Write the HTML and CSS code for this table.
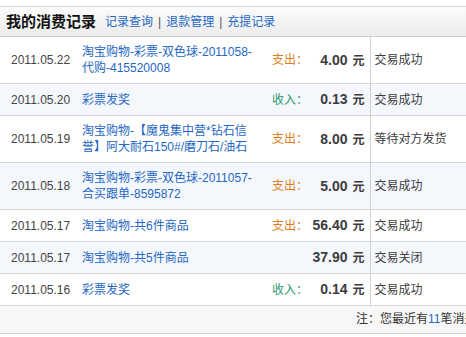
FILE: index.html
```html
<!DOCTYPE html>
<html lang="zh-CN">
<head>
<meta charset="utf-8">
<title>我的消费记录</title>
<link rel="stylesheet" href="styles.css">
</head>
<body>
<div class="page">
  <div class="panel">
    <div class="head">
      <h2 class="title">我的消费记录</h2>
      <nav class="tabs">
        <a href="#">记录查询</a><span class="sep">|</span><a href="#">退款管理</a><span class="sep">|</span><a href="#">充提记录</a>
      </nav>
    </div>
    <table class="records">
      <colgroup>
        <col class="c-date"><col class="c-desc"><col class="c-type"><col class="c-amt"><col class="c-status">
      </colgroup>
      <tbody>
        <tr>
          <td class="date">2011.05.22</td>
          <td class="desc"><a href="#">淘宝购物-彩票-双色球-2011058-代购-415520008</a></td>
          <td class="type out">支出：</td>
          <td class="amt">4.00<span class="unit">元</span></td>
          <td class="status">交易成功</td>
        </tr>
        <tr class="alt">
          <td class="date">2011.05.20</td>
          <td class="desc"><a href="#">彩票发奖</a></td>
          <td class="type in">收入：</td>
          <td class="amt">0.13<span class="unit">元</span></td>
          <td class="status">交易成功</td>
        </tr>
        <tr>
          <td class="date">2011.05.19</td>
          <td class="desc"><a href="#">淘宝购物-【魔鬼集中营*钻石信誉】阿大耐石150#/磨刀石/油石</a></td>
          <td class="type out">支出：</td>
          <td class="amt">8.00<span class="unit">元</span></td>
          <td class="status">等待对方发货</td>
        </tr>
        <tr class="alt">
          <td class="date">2011.05.18</td>
          <td class="desc"><a href="#">淘宝购物-彩票-双色球-2011057-合买跟单-8595872</a></td>
          <td class="type out">支出：</td>
          <td class="amt">5.00<span class="unit">元</span></td>
          <td class="status">交易成功</td>
        </tr>
        <tr>
          <td class="date">2011.05.17</td>
          <td class="desc"><a href="#">淘宝购物-共6件商品</a></td>
          <td class="type out">支出：</td>
          <td class="amt">56.40<span class="unit">元</span></td>
          <td class="status">交易成功</td>
        </tr>
        <tr class="alt">
          <td class="date">2011.05.17</td>
          <td class="desc"><a href="#">淘宝购物-共5件商品</a></td>
          <td class="type"></td>
          <td class="amt">37.90<span class="unit">元</span></td>
          <td class="status">交易关闭</td>
        </tr>
        <tr>
          <td class="date">2011.05.16</td>
          <td class="desc"><a href="#">彩票发奖</a></td>
          <td class="type in">收入：</td>
          <td class="amt">0.14<span class="unit">元</span></td>
          <td class="status">交易成功</td>
        </tr>
      </tbody>
    </table>
    <div class="foot">注：您最近有<a href="#">11</a>笔消费记录</div>
  </div>
</div>
</body>
</html>
```
FILE: styles.css
```css
html, body {
  margin: 0;
  padding: 0;
  background: #fff;
  overflow: hidden;
}
body {
  font-family: "Liberation Sans", "Noto Sans CJK SC", sans-serif;
  font-size: 12px;
  color: #404040;
}
a {
  color: #2467c4;
  text-decoration: none;
}
.page {
  padding-top: 6px;
  width: 520px;
}
.panel {
  width: 520px;
}
.head {
  display: flex;
  align-items: center;
  height: 29px;
  border-top: 1px solid #d4d4d4;
  border-bottom: 1px solid #cdcdcd;
  background: linear-gradient(#fcfcfc, #ebebeb);
  padding-left: 6px;
}
.title {
  margin: 0;
  font-size: 15px;
  font-weight: bold;
  color: #111;
  line-height: 20px;
}
.tabs {
  margin-left: 9px;
  font-size: 12px;
  line-height: 20px;
  padding-top: 1px;
}
.tabs .sep {
  color: #555;
  margin: 0 5px;
}
.records {
  width: 100%;
  border-collapse: collapse;
  table-layout: fixed;
}
.c-date { width: 82px; }
.c-desc { width: 189px; }
.c-type { width: 38px; }
.c-amt { width: 61px; }
.records td {
  height: 32px;
  box-sizing: border-box;
  padding: 7px 0;
  line-height: 16px;
  border-bottom: 1px solid #d6d6d6;
  vertical-align: middle;
}
.records tr.alt td {
  background: #f4f7fc;
}
.records td.date {
  padding-left: 11px;
  white-space: nowrap;
  color: #444;
}
.records td.desc {
  padding-right: 14px;
}
.records td.type {
  padding-left: 1px;
}
.type.out { color: #e07c1c; }
.type.in { color: #2d9a6c; }
.records td.amt {
  text-align: right;
  padding-right: 5px;
  font-size: 14px;
  font-weight: bold;
  color: #3c3c3c;
  border-right: 1px solid #d0d0d0;
  white-space: nowrap;
}
.amt .unit {
  font-size: 12px;
  margin-left: 5px;
}
.records td.status {
  padding-left: 4px;
  white-space: nowrap;
}
.foot {
  height: 27px;
  line-height: 27px;
  background: #f7f7f7;
  border-bottom: 1px solid #d0d0d0;
  text-align: left;
  padding-left: 356px;
  white-space: nowrap;
  color: #333;
}
```
